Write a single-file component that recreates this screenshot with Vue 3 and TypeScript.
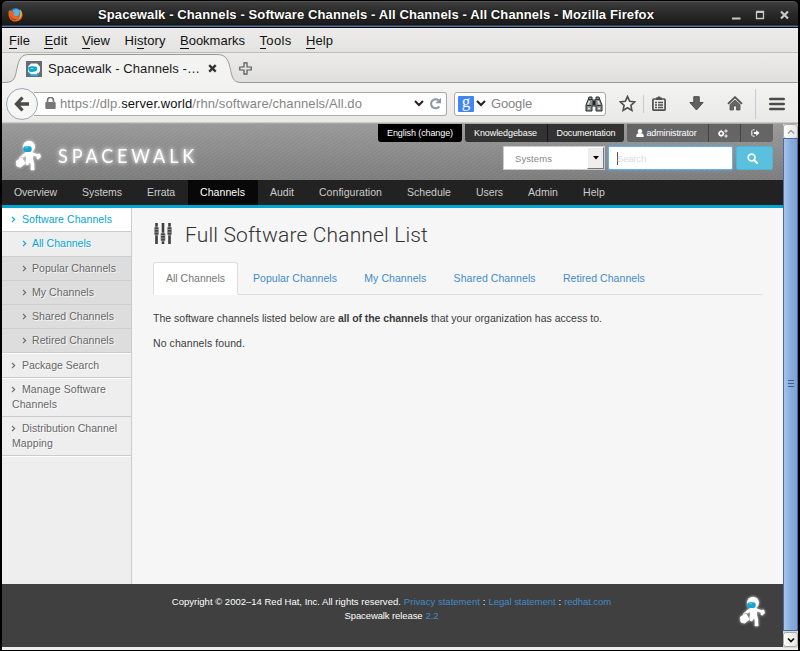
<script setup lang="ts">
interface Label {
  text: string
  width: number
}
interface NavItem extends Label {
  active?: boolean
}
interface SideItem {
  lines: Label[]
  kind: 'top' | 'current' | 'sub' | 'item'
}

const menus: { key: string; rest: string; width: number; pre?: string }[] = [
  { key: 'F', rest: 'ile', width: 21 },
  { key: 'E', rest: 'dit', width: 23 },
  { key: 'V', rest: 'iew', width: 28 },
  { pre: 'Hi', key: 's', rest: 'tory', width: 41 },
  { key: 'B', rest: 'ookmarks', width: 65 },
  { key: 'T', rest: 'ools', width: 32 },
  { key: 'H', rest: 'elp', width: 27 },
]

const nav: NavItem[] = [
  { text: 'Overview', width: 43 },
  { text: 'Systems', width: 40 },
  { text: 'Errata', width: 28 },
  { text: 'Channels', width: 45, active: true },
  { text: 'Audit', width: 24 },
  { text: 'Configuration', width: 63 },
  { text: 'Schedule', width: 44 },
  { text: 'Users', width: 27 },
  { text: 'Admin', width: 30 },
  { text: 'Help', width: 22 },
]

const side: SideItem[] = [
  { kind: 'top', lines: [{ text: 'Software Channels', width: 90 }] },
  { kind: 'current', lines: [{ text: 'All Channels', width: 59 }] },
  { kind: 'sub', lines: [{ text: 'Popular Channels', width: 84 }] },
  { kind: 'sub', lines: [{ text: 'My Channels', width: 62 }] },
  { kind: 'sub', lines: [{ text: 'Shared Channels', width: 82 }] },
  { kind: 'sub', lines: [{ text: 'Retired Channels', width: 82 }] },
  { kind: 'item', lines: [{ text: 'Package Search', width: 77 }] },
  { kind: 'item', lines: [{ text: 'Manage Software', width: 84 }, { text: 'Channels', width: 45 }] },
  { kind: 'item', lines: [{ text: 'Distribution Channel', width: 95 }, { text: 'Mapping', width: 41 }] },
]

const tabs: NavItem[] = [
  { text: 'All Channels', width: 59, active: true },
  { text: 'Popular Channels', width: 84 },
  { text: 'My Channels', width: 62 },
  { text: 'Shared Channels', width: 82 },
  { text: 'Retired Channels', width: 82 },
]

// Spreads the letters of a label so that it fills the given width.
const vFit = {
  mounted(el: HTMLElement, binding: { value: number }) {
    const natural = el.getBoundingClientRect().width
    const count = (el.textContent ?? '').length
    if (count > 0) el.style.letterSpacing = `${(binding.value - natural) / count}px`
  },
}
</script>

<template>
  <div class="window">
    <svg class="defs" width="0" height="0">
      <symbol id="astronaut" viewBox="0 0 34 38">
        <g fill="none" stroke="#fff" stroke-linecap="round" stroke-linejoin="round">
          <path d="M17.500 18v5.500" stroke-width="7" />
          <path d="M19 17.500l5 1.500 3.500 1.500m-1.500 1.500l1-3" stroke-width="2.800" />
          <path d="M15 17.500l-4 2.500" stroke-width="3" />
          <path d="M19.500 24l1 4v4" stroke-width="3.400" />
          <path d="M15.500 24l-.3 3.500" stroke-width="3.400" />
          <path d="M19.800 33h1.500" stroke-width="2.600" />
        </g>
        <path d="M4.500 25l5.500-3 3 5.500-4.500 3.500-3.500-1z" fill="#fff" stroke="#fff" stroke-linejoin="round" />
        <path d="M7.500 24l.5-3 2-.5" fill="none" stroke="#fff" />
        <circle cx="17" cy="10.800" r="6" fill="#fff" />
        <rect x="11.200" y="10.200" width="8.500" height="5.800" rx="2.500" fill="#12a5d0" />
        <path d="M13.300 11.800h2.500" stroke="#75d7ee" />
      </symbol>
      <symbol id="chevron" viewBox="0 0 5 7">
        <path d="M1 .8l2.700 2.700L1 6.200" fill="none" stroke="currentColor" stroke-width="1.100" />
      </symbol>
    </svg>

    <header class="titlebar">
      <svg class="fox" width="15" height="15" viewBox="0 0 15 15">
        <circle cx="7.500" cy="7.500" r="6.500" fill="#3278b8" />
        <path d="M5 3l4-1 3 2-1 4-3 2-3-2z" fill="#5fb2df" />
        <path d="M1 3l3 1.500L7 5 5.500 7l1.500 2.500 3 .5 2.500-3L12 2.500c2.500 2 3.500 6 1.500 9-2.500 4-9 4-11.500.5C.3 9.500.1 6 1 3z" fill="#e8651b" />
        <path d="M12 2.500c2.500 2.500 2.500 7-1 9.500 1.500-3 2-6 1-9.500z" fill="#f9c43b" />
        <path d="M2 8c1 3 3.500 4.500 7 4.500-3 2-6.500.5-7-4.500z" fill="#c8330f" />
      </svg>
      <span class="wtitle" v-fit="556">Spacewalk - Channels - Software Channels - All Channels - All Channels - Mozilla Firefox</span>
      <svg class="winbtns" width="58" height="12" viewBox="0 0 58 12" fill="none" stroke="#c9c9c9">
        <path d="M0 9.500h8.500" stroke-width="2" />
        <path d="M24.500 3v6.500h7V2.500h-7.500" stroke-width="1.300" />
        <path d="M24 3h8" stroke-width="2" />
        <path d="M49 2.500l7 7m0-7l-7 7" stroke-width="2.200" />
      </svg>
    </header>

    <nav class="menubar">
      <span v-for="m in menus" :key="m.key + m.rest" class="menu"><span v-fit="m.width">{{ m.pre }}<u>{{ m.key }}</u>{{ m.rest }}</span></span>
    </nav>

    <div class="tabstrip">
      <svg class="tabshape" width="796" height="30" viewBox="0 0 796 30">
        <path d="M0 29.500h3c11 0 10-7 12-14C17 6 19 1.500 27 1.500h188c8 0 11 4 13 13 2 8 2 15 11 15h557v1H0z" fill="#f3f3f2" />
        <path d="M0 29.500h3c11 0 10-7 12-14C17 6 19 1.500 27 1.500h188c8 0 11 4 13 13 2 8 2 15 11 15h557" fill="none" stroke="#9a9a98" />
      </svg>
      <svg class="favicon" width="16" height="16" viewBox="0 0 16 16">
        <path d="M0 0h16v16H0z" fill="#656b70" />
        <path d="M5 2.500h6l3 3V10l-2.500 4.500h-6L2 11V5.500z" fill="#eefbff" />
        <path d="M2 6.500c2-1.500 6-1.500 9-.5v3c-1 2-6 2.500-8 1.500z" fill="#10a4d0" />
        <path d="M2 11.500l3 2.500h6l1.500-2" fill="none" stroke="#13a7d2" stroke-width="1.300" />
        <path d="M4.500 7.500h3" stroke="#77d8f3" />
      </svg>
      <span class="tabtitle" v-fit="152">Spacewalk - Channels -…</span>
      <svg class="tabclose" width="9" height="9" viewBox="0 0 9 9">
        <path d="M1.200 1.200l6.500 6.500m0-6.500L1.200 7.700" stroke="#333" stroke-width="2.400" />
      </svg>
      <svg class="newtab" width="13" height="13" viewBox="0 0 13 13">
        <path d="M5 .8h3V5h4.200v3H8v4.200H5V8H.8V5H5z" fill="#e5e5e3" stroke="#555" stroke-width="1.200" />
      </svg>
    </div>

    <div class="toolbar">
      <div class="back">
        <svg width="16" height="16" viewBox="0 0 16 16">
          <path d="M8.500 1.500L2.500 8l6 6.500M3.500 8h11.500" fill="none" stroke="#4b4b4b" stroke-width="3.300" />
        </svg>
      </div>
      <div class="urlbar">
        <svg class="lock" width="11" height="12" viewBox="0 0 11 12">
          <path d="M2.500 6V3.500a3 3 0 0 1 6 0V6" fill="none" stroke="#777" stroke-width="1.700" />
          <rect x=".3" y="5" width="10.400" height="7" rx="1" fill="#777" />
        </svg>
        <span class="url" v-fit="302">https://dlp.<b>server.world</b>/rhn/software/channels/All.do</span>
        <svg class="drop" width="10" height="7" viewBox="0 0 10 7"><path d="M1 1l4 4 4-4" fill="none" stroke="#222" stroke-width="2" /></svg>
        <svg class="reload" width="13" height="13" viewBox="0 0 13 13">
          <path d="M9.500 3.300A4.500 4.500 0 1 0 10.300 9.300" fill="none" stroke="#8b98a5" stroke-width="2.100" />
          <path d="M12 .8v5.500H6.500z" fill="#8b98a5" />
        </svg>
      </div>
      <div class="searchbar">
        <span class="g">g</span>
        <svg class="gdrop" width="10" height="7" viewBox="0 0 10 7"><path d="M1 1l4 4 4-4" fill="none" stroke="#222" stroke-width="2" /></svg>
        <span class="engine" v-fit="41">Google</span>
        <svg class="binoc" width="18" height="16" viewBox="0 0 18 16">
          <path d="M4 1h3v3h4V1h3l1 3 2 5v6h-6v-5H7v5H1V9l2-5z" fill="#8a908f" stroke="#262b2b" />
          <path d="M3.500 3.500h4m3 0h4M2 9.500h4.500m5 0H16" stroke="#303535" />
          <path d="M4.500 5L3 8.500m10-3.500l1.500 3.500M3 12.500h2m8 0h2" stroke="#e4ebe9" stroke-width="1.500" />
          <path d="M7.500 5h3v4h-3z" fill="#222" />
        </svg>
      </div>
      <div class="tools">
        <svg width="17" height="17" viewBox="0 0 17 17"><path d="M8.500 1.500l2.100 4.700 5.100.6-3.800 3.500 1 5.100-4.400-2.600-4.400 2.600 1-5.100-3.800-3.500 5.100-.6z" fill="#f4f4f3" stroke="#4f4f4f" stroke-width="1.600" /></svg>
        <i class="sep short"></i>
        <svg class="clip" width="14" height="15" viewBox="0 0 14 15">
          <rect x=".9" y="3" width="12.200" height="11.200" rx="1" fill="none" stroke="#505050" stroke-width="1.700" />
          <path d="M4 3V1.500h1.500L6 .5h2l.5 1H10V4H4z" fill="#505050" />
          <path d="M3 6.500h2m1 0h5M3 9h2m1 0h5M3 11.500h2m1 0h5" stroke="#505050" stroke-width="1.300" />
        </svg>
        <svg class="down" width="15" height="15" viewBox="0 0 15 15"><path d="M4.800.7h5.400v5.800h3.900L7.500 14 .9 6.500h3.900z" fill="#626262" stroke="#4b4b4b" /></svg>
        <svg class="home" width="16" height="15" viewBox="0 0 16 15">
          <path d="M1 7.800L8 1.200l7 6.600" fill="none" stroke="#505050" stroke-width="1.800" />
          <path d="M3 8.500L8 4l5 4.500V14H9.500v-4h-3v4H3z" fill="#666" stroke="#505050" stroke-width=".8" />
        </svg>
        <i class="sep tall"></i>
        <svg class="burger" width="16" height="14" viewBox="0 0 16 14"><path d="M1.300 2h13.400M1.300 7h13.400M1.300 12h13.400" stroke="#4b4b4b" stroke-width="2.600" stroke-linecap="round" /></svg>
      </div>
    </div>

    <div class="viewport">
      <div class="page">
        <div class="banner">
          <div class="brand">
            <svg class="astro" width="34" height="38"><use href="#astronaut" /></svg>
            <span class="wordmark"><span v-fit="141">SPACEWALK</span></span>
          </div>
          <div class="controls">
            <div class="pills">
              <span class="pill lang"><span v-fit="66">English (change)</span></span>
              <span class="pill docs kb"><span v-fit="63">Knowledgebase</span></span>
              <span class="pill docs doc"><span v-fit="59">Documentation</span></span>
              <span class="pill user adm">
                <svg width="8" height="8" viewBox="0 0 8 8"><circle cx="4" cy="2.300" r="2.200" fill="#fff" /><path d="M.3 8V6l1.600-1.700h4.200L7.700 6v2z" fill="#fff" /></svg>
                <span v-fit="50">administrator</span>
              </span>
              <span class="pill user cog">
                <svg width="10" height="9" viewBox="0 0 10 9" fill="none" stroke="#fff">
                  <circle cx="3.200" cy="4.500" r="2.100" stroke-width="1.500" />
                  <path d="M3.200.8v1.500m0 4.500v1.400M0 4.500h1m4.500 0h1" stroke-width=".9" />
                  <circle cx="8" cy="2" r="1.100" /><circle cx="8" cy="7" r="1.100" />
                </svg>
              </span>
              <span class="pill user out">
                <svg width="9" height="8" viewBox="0 0 9 8"><path d="M3.500.8H1.800L.8 1.800v4.400l1 1h1.700" fill="none" stroke="#fff" /><path d="M2.800 3h2.400V1l3.300 3-3.300 3V5H2.800z" fill="#fff" /></svg>
              </span>
            </div>
            <div class="finder">
              <div class="select"><span v-fit="37">Systems</span><i class="arrow"><svg width="6" height="4" viewBox="0 0 6 4"><path d="M0 0h6L3 3.600z" fill="#000" /></svg></i></div>
              <div class="input"><i class="caret"></i><span v-fit="29">Search</span></div>
              <div class="go"><svg width="11" height="11" viewBox="0 0 11 11"><circle cx="4.600" cy="4.600" r="3.400" fill="none" stroke="#fff" stroke-width="1.700" /><path d="M7 7l3 3" stroke="#fff" stroke-width="2" stroke-linecap="round" /></svg></div>
            </div>
          </div>
        </div>

        <nav class="mainnav">
          <span v-for="n in nav" :key="n.text" class="navitem" :class="{ active: n.active }"><span v-fit="n.width">{{ n.text }}</span></span>
        </nav>

        <div class="body">
          <aside class="side">
            <div v-for="(s, i) in side" :key="i" class="sitem" :class="s.kind">
              <div v-for="(l, j) in s.lines" :key="j" class="sline">
                <svg v-if="j === 0" class="chev" width="5" height="7"><use href="#chevron" /></svg>
                <span v-fit="l.width">{{ l.text }}</span>
              </div>
            </div>
          </aside>
          <main class="main">
            <h1>
              <svg width="18" height="22" viewBox="0 0 18 22" fill="#3f3f3f">
                <path d="M1.200 0h2.600v21H1.200zM7.700 0h2.600v21H7.700zM14.200 0h2.600v21h-2.600z" />
                <path d="M.2 4h4.600v8H.2zM6.700 10h4.600v8H6.700zM13.200 4h4.600v8h-4.600z" stroke="#f6f6f6" stroke-width=".5" />
                <path d="M0 6.500h5M0 9.200h5M6.500 12.500h5m-5 2.700h5M13 6.500h5M13 9.200h5" stroke="#aaa" stroke-width=".8" />
              </svg>
              <span v-fit="243">Full Software Channel List</span>
            </h1>
            <div class="tabs">
              <span v-for="t in tabs" :key="t.text" class="tab" :class="{ active: t.active }"><span v-fit="t.width">{{ t.text }}</span></span>
            </div>
            <p class="first"><span v-fit="185">The software channels listed below are&nbsp;</span><b v-fit="90">all of the channels</b><span v-fit="174">&nbsp;that your organization has access to.</span></p>
            <p><span v-fit="92">No channels found.</span></p>
          </main>
        </div>

        <footer class="foot">
          <div class="legal">
            <div class="fline"><span v-fit="229">Copyright © 2002–14 Red Hat, Inc. All rights reserved.</span><a v-fit="76">Privacy statement</a><span>:</span><a v-fit="67">Legal statement</a><span>:</span><a v-fit="47">redhat.com</a></div>
            <div class="fline"><span v-fit="78">Spacewalk release</span><a v-fit="13">2.2</a></div>
          </div>
          <svg class="astro fastro" width="34" height="38"><use href="#astronaut" /></svg>
        </footer>
      </div>

      <div class="scroll">
        <div class="sbtn"><svg width="8" height="6" viewBox="0 0 8 6"><path d="M1 4.500l3-3 3 3" fill="none" stroke="#999" stroke-width="1.300" /></svg></div>
        <div class="thumb"><i></i><i></i><i></i></div>
        <div class="sbtn"><svg width="8" height="6" viewBox="0 0 8 6"><path d="M1 1.500l3 3 3-3" fill="none" stroke="#111" stroke-width="1.700" /></svg></div>
      </div>
    </div>
  </div>
</template>

<style>
body {
  margin: 0;
  background: #000;
  overflow: hidden;
}
</style>

<style scoped>
* { box-sizing: border-box; }
svg { display: block; flex: none; }
.window {
  width: 800px;
  height: 651px;
  padding: 1px 2px 0;
  background: #000;
  font-family: "Liberation Sans", Arial, sans-serif;
  white-space: nowrap;
  overflow: hidden;
  display: flex;
  flex-direction: column;
}
.defs { position: absolute; }
.titlebar {
  height: 27px;
  flex: none;
  display: flex;
  align-items: center;
  border-radius: 5px 5px 0 0;
  border-top: 1px solid #555;
  background: linear-gradient(#3d3d3d, #292929 45%, #1b1b1b 22px, #111 23px, #5375a3 24px, #5375a3 25px, #000 25px);
  padding: 0 8px 2px 6px;
}
.wtitle { margin-left: 75px; font-size: 13px; font-weight: bold; color: #fff; text-shadow: 0 0 2px #000; }
.fox { margin-top: 1px; }
.winbtns { margin: 2px 0 0 auto; }
.menubar {
  height: 25px;
  flex: none;
  display: flex;
  align-items: center;
  gap: 14.500px;
  padding-left: 7px;
  border-bottom: 1px solid #bcbcba;
  background: linear-gradient(#edecea, #e3e3e1);
  font-size: 13px;
  color: #111;
}
.menu { line-height: 16px; padding-top: 1px; }
.menu u { text-decoration: none; border-bottom: 1px solid #111; }
.tabstrip {
  position: relative;
  height: 30px;
  flex: none;
  display: flex;
  align-items: center;
  padding: 1px 0 0 24px;
  background: linear-gradient(#ecebe9, #dfdfdd);
  font-size: 13px;
  color: #1a1a1a;
}
.tabshape { position: absolute; left: 0; top: 0; }
.favicon, .tabtitle, .tabclose, .newtab { position: relative; }
.tabtitle { margin-left: 6px; }
.tabclose { margin-left: 7.500px; }
.newtab { margin-left: 22px; }
.toolbar {
  height: 41px;
  flex: none;
  display: flex;
  align-items: center;
  padding: 0 13px 0 4px;
  background: linear-gradient(#f3f3f2, #e9e9e7 39px, #a9a9a7 40px);
  font-size: 13px;
  color: #858585;
}
.back {
  z-index: 1;
  width: 32px;
  height: 32px;
  flex: none;
  border-radius: 50%;
  border: 1px solid #9ca8b8;
  background: #f6f6f5;
  display: flex;
  align-items: center;
  justify-content: center;
}
.urlbar {
  width: 413px;
  height: 24px;
  margin-left: -4px;
  flex: none;
  display: flex;
  align-items: center;
  padding: 0 4px 0 11px;
  background: #fff;
  border: 1px solid #a9a9a7;
  border-left: 0;
  border-radius: 0 3px 3px 0;
}
.lock { margin-top: -2px; }
.url { margin-left: 4px; }
.url b { font-weight: normal; color: #111; }
.drop { margin-left: auto; }
.reload { margin-left: 5px; }
.searchbar {
  width: 152px;
  height: 24px;
  margin-left: 7px;
  flex: none;
  display: flex;
  align-items: center;
  padding: 0 2px 0 3px;
  background: #fff;
  border: 1px solid #a9a9a7;
  border-radius: 3px;
}
.g {
  width: 16px;
  height: 16px;
  border-radius: 1px;
  background: #4285f4;
  color: #fff;
  font: 17px/11px "Liberation Serif", serif;
  text-align: center;
}
.gdrop { margin-left: 2px; }
.engine { margin-left: 5px; }
.binoc { margin-left: auto; }
.tools { flex: 1; display: flex; align-items: center; margin-left: 13px; }
.sep { width: 1px; background: #c3cad1; }
.short { height: 18px; margin-left: 7px; }
.tall { height: 30px; margin-left: 12px; }
.clip { margin-left: 8px; }
.down { margin-left: 23px; }
.home { margin-left: 23px; }
.burger { margin-left: auto; }

.viewport { height: 524px; flex: none; display: flex; background: #f0f0ee; }
.window::after { content: ""; height: 2px; flex: none; background: #eeeeec; }
.page { width: 781px; height: 523px; display: flex; flex-direction: column; }
.banner {
  height: 56px;
  flex: none;
  display: flex;
  justify-content: space-between;
  padding-right: 10px;
  background:
    repeating-linear-gradient(145deg, rgba(255, 255, 255, .05) 0 1px, transparent 1px 3px),
    linear-gradient(#999, #7c7c7c);
}
.brand { display: flex; padding: 13px 0 0 10px; }
.astro { filter: drop-shadow(0 0 1.500px rgba(255, 255, 255, .8)); overflow: visible; }
.brand .astro { margin: -1px 0 0 0; }
.wordmark {
  margin: 7px 0 0 12px;
  font: 400 18.500px/24px Lato, sans-serif;
  color: #fff;
  text-shadow: 0 0 4px rgba(255, 255, 255, .9), 0 0 7px rgba(255, 255, 255, .6);
}
.wordmark span { display: inline-block; transform: scaleX(.975); transform-origin: 0 50%; }
.controls { display: flex; flex-direction: column; align-items: flex-end; }
.pills { display: flex; height: 18px; font-size: 9px; color: #fff; }
.pill { display: flex; align-items: center; justify-content: center; height: 18px; }
.lang { width: 84px; background: #000; border-radius: 0 0 3px 3px; margin-right: 3px; }
.docs { background: #323232; }
.kb { width: 83px; border-right: 1px solid #181818; border-radius: 0 0 0 3px; padding-right: 1px; }
.doc { width: 76px; border-radius: 0 0 3px 0; margin-right: 3px; }
.user { background: #656565; }
.adm { width: 82px; gap: 3px; border-right: 1px solid #444; border-radius: 0 0 0 3px; padding-right: 3px; }
.cog { width: 32px; border-right: 1px solid #444; padding-right: 4px; }
.out { width: 32px; padding-right: 4px; border-radius: 0 0 3px 0; }
.finder { display: flex; margin-top: 4px; font-size: 9.500px; }
.select {
  width: 102px;
  height: 24px;
  display: flex;
  align-items: center;
  justify-content: space-between;
  padding-left: 11px;
  background: #fff;
  border: 1px solid #ccc;
  color: #888;
}
.arrow {
  width: 17px;
  height: 22px;
  display: flex;
  align-items: center;
  justify-content: center;
  background: #eee;
  border: 1px solid #fff;
  border-right-color: #777;
  border-bottom-color: #777;
}
.input {
  width: 125px;
  height: 24px;
  margin: 0 3px;
  display: flex;
  align-items: center;
  padding-left: 8px;
  background: #fff;
  border: 1px solid #66afe9;
  border-radius: 2px;
  box-shadow: 0 0 5px rgba(102, 175, 233, .6);
  color: #ddd;
}
.caret { width: 1px; height: 13px; background: #555; margin-right: -1px; }
.go {
  width: 37px;
  height: 24px;
  display: flex;
  align-items: center;
  justify-content: center;
  padding-right: 5px;
  background: #5bc0de;
  border: 1px solid #46b8da;
  border-radius: 2px;
}
.mainnav {
  height: 28px;
  flex: none;
  display: flex;
  background: #222;
  border-bottom: 3px solid #00a6d2;
  color: #ccc;
  font-size: 10.500px;
}
.navitem { padding: 0 12.500px; line-height: 25px; }
.navitem:first-child { padding-left: 12px; }
.navitem.active { background: #080808; color: #fff; }
.body { height: 376px; flex: none; display: flex; background: #f6f6f6; font-size: 10.500px; }
.side { width: 130px; flex: none; background: #eee; border-right: 1px solid #ccc; color: #666; text-shadow: 1px 1px 1px #fff; }
.sitem { padding: 4px 10px 4px; border-bottom: 1px solid #ccc; }
.sline { display: flex; align-items: center; line-height: 15px; }
.chev { margin: 0 6px 0 -1px; }
.top { background: #fff; color: #00a6d2; }
.current { background: #eee; color: #00a6d2; padding: 4px 10px 5px 20px; }
.sub { background: #ddd; padding-left: 20px; }
.current .chev, .sub .chev { margin-left: 0; margin-right: 5px; }
.sub + .item, .sitem:last-child { box-shadow: 0 1px #fff; }
.sub + .item { border-top: 1px solid #fff; }
.main { flex: 1; padding: 13px 21px 0; color: #3c3c3c; }
h1 {
  display: flex;
  align-items: center;
  gap: 13px;
  height: 28px;
  margin: 0;
  font: 300 21px/28px Roboto, sans-serif;
  color: #333;
}
h1 svg { margin: -2px 0 0 1px; }
.tabs { display: flex; height: 33px; margin-top: 13px; border-bottom: 1px solid #ddd; color: #428bca; }
.tab { height: 33px; line-height: 30px; padding: 0 12px; border: 1px solid transparent; margin-right: 1.300px; }
.tab.active { background: #fff; color: #777; border-color: #ddd; border-bottom-color: #fff; border-radius: 3px 3px 0 0; width: 85px; margin-right: 2px; }
p { display: flex; margin: 0 0 10px; line-height: 15px; }
.first { margin-top: 16px; }
.foot { flex: 1; display: flex; background: #404040; color: #fff; font-size: 9.500px; }
.legal { flex: 1; padding: 11px 0 0 0; margin-left: 42px; }
.fline { display: flex; justify-content: center; gap: 3px; line-height: 14px; }
.fline a { color: #428bca; }
.fastro { margin: 8px 13px 0 -3px; }

.scroll { width: 15px; display: flex; flex-direction: column; background: #d8d8d6; padding-bottom: 1px; }
.sbtn { height: 15px; flex: none; display: flex; align-items: center; justify-content: center; border: 1px solid #aaa; border-radius: 3px; background: linear-gradient(90deg, #fff, #e5e5e3); }
.thumb {
  flex: 1;
  display: flex;
  flex-direction: column;
  align-items: center;
  justify-content: center;
  gap: 2px;
  padding-bottom: 3px;
  margin: -1px 0 1px;
  border: 1px solid #4b6b9e;
  background: linear-gradient(90deg, #a6c5ee, #8baedd 50%, #7da1d3);
}
.thumb i { width: 6px; height: 1px; background: #3f5f93; }
</style>
